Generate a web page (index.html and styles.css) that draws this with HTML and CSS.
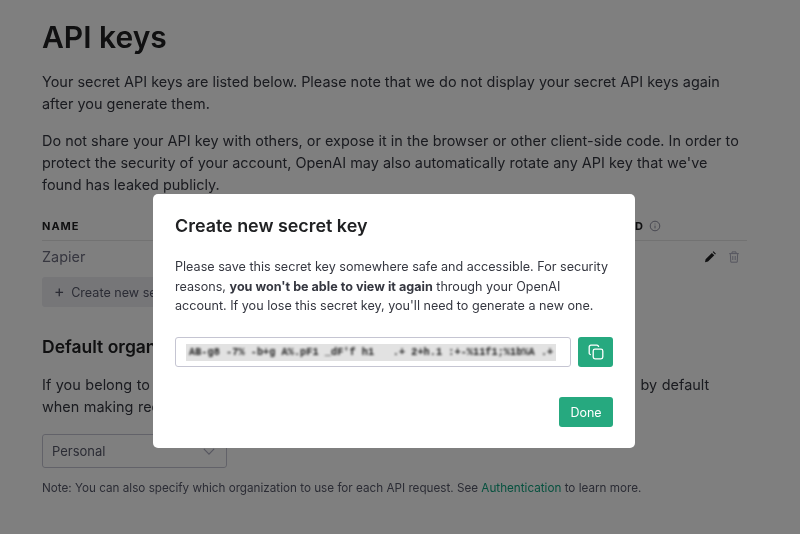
FILE: index.html
```html
<!DOCTYPE html>
<html lang="en">
<head>
	<meta charset="UTF-8">
	<title>API keys</title>
	<link rel="stylesheet" href="styles.css">
</head>
<body>
	<div class="page">
		<h1>API keys</h1>
		<p>Your secret API keys are listed below. Please note that we do not display your secret API keys again after you generate them.</p>
		<p>Do not share your API key with others, or expose it in the browser or other client-side code. In order to protect the security of your account, OpenAI may also automatically rotate any API key that we've found has leaked publicly.</p>

		<div class="table-head">
			<span>NAME</span>
			<span class="last-used">LAST USED
				<svg class="info" viewBox="0 0 12 12" width="12" height="12"><circle cx="6" cy="6" r="4.8"/><path d="M6 5.6v2.8M6 3.6v.8"/></svg>
			</span>
		</div>
		<div class="table-row">
			<span>Zapier</span>
			<span class="actions">
				<svg viewBox="0 0 14 14" width="14" height="14"><path class="pencil" d="M2 12.2l.6-3L8.9 2.9l2.4 2.4L5 11.6zM9.7 2.1l.8-.8 2.4 2.4-.8.8z"/></svg>
				<svg viewBox="0 0 14 14" width="14" height="14"><path class="trash" d="M2.2 3.6h9.6M5 3.4V1.9h4v1.5M3.3 3.8l.5 8.4h6.4l.5-8.4M5.8 6v4M8.2 6v4"/></svg>
			</span>
		</div>
		<button class="add-key"><span class="plus">+</span> Create new secret key</button>

		<h2>Default organization</h2>
		<p class="org-text">If you belong to multiple organizations, this setting controls which organization is used by default<br>when making requests with the API keys above.</p>
		<div class="select">Personal
			<svg viewBox="0 0 14 8" width="12" height="7"><path d="M1 1l6 6 6-6"/></svg>
		</div>
		<p class="note">Note: You can also specify which organization to use for each API request. See <a href="#">Authentication</a> to learn more.</p>
	</div>

	<div class="overlay">
		<div class="modal">
			<h3>Create new secret key</h3>
			<p>Please save this secret key somewhere safe and accessible. For security reasons, <b>you won't be able to view it again</b> through your OpenAI<br>account. If you lose this secret key, you'll need to generate a new one.</p>
			<div class="key-row">
				<div class="key-input"><span class="key-mask"><span class="key-text">AB-g8 -7% -b+g A%.pF1 _dF'f h1   .+ 2+h.1 :+-%11f1;%1b%A .+</span></span></div>
				<button class="copy">
					<svg viewBox="0 0 16 16" width="16" height="16"><rect x="5.2" y="5.2" width="9.6" height="9.6" rx="1.8"/><path d="M2.9 10.6a1.7 1.7 0 0 1-1.7-1.7V2.9a1.7 1.7 0 0 1 1.7-1.7h6a1.7 1.7 0 0 1 1.7 1.7"/></svg>
				</button>
			</div>
			<div class="modal-foot"><button class="done">Done</button></div>
		</div>
	</div>
</body>
</html>
```
FILE: styles.css
```css
*{margin:0;padding:0;box-sizing:border-box;}
html,body{height:100%;overflow:hidden;}
body{background:#fff;color:#353740;font-family:"Inter",sans-serif;font-size:14.44px;line-height:22px;}
.page{padding:19px 53px 0 42px;filter:blur(.35px);}
h1{font-size:30px;line-height:36px;font-weight:600;color:#202123;margin-bottom:16px;}
p{margin-bottom:15px;}
.org-text{word-spacing:.5px;margin-bottom:16px;}

.table-head{display:flex;justify-content:space-between;height:30px;margin-top:15px;padding:2px 91px 0 0;border-bottom:1px solid #e5e5e5;font-size:11px;line-height:26px;font-weight:700;letter-spacing:1px;color:#202123;}
.last-used{display:flex;align-items:center;gap:5px;height:26px;margin-right:-5px;}
.info{fill:none;stroke:#8e8ea0;stroke-width:1;}
.table-row{display:flex;justify-content:space-between;align-items:center;height:32px;padding-right:6px;color:#6e6e80;}
.actions{display:flex;gap:10px;}
.pencil{fill:#202123;}
.trash{fill:none;stroke:#acacbe;stroke-width:1;}
.add-key{display:block;width:190px;height:30px;margin-top:4px;border:0;border-radius:3px;background:#ececf1;color:#565869;font:12.6px/28px "Inter",sans-serif;text-align:left;padding:0 0 2px 12px;}
.plus{font-size:16px;margin-right:3px;}

h2{font-size:17.5px;line-height:24px;font-weight:600;color:#202123;margin:28px 0 15px;}
.select{display:flex;justify-content:space-between;align-items:center;width:185px;height:34px;padding:0 11px 0 9px;border:1px solid #c5c5d2;border-radius:3px;font-size:13px;color:#565869;}
.select svg{fill:none;stroke:#acacbe;stroke-width:1.4;}
.note{font-size:11.7px;margin-top:9px;color:#565869;}
.note a{color:#10a37f;text-decoration:none;}

.overlay{position:fixed;inset:0;background:rgba(0,0,0,.5);}
.modal{position:absolute;left:153px;top:194px;width:482px;height:254px;padding:20px 22px;background:#fff;border-radius:5px;filter:blur(.35px);}
h3{font-size:17.9px;line-height:24px;font-weight:600;color:#202123;margin-bottom:19px;}
.modal p{font-size:12.6px;line-height:19.5px;margin-bottom:21.5px;color:#353740;}
.modal b{font-weight:700;}
.key-row{display:flex;gap:7px;height:30px;}
.key-input{flex:1;display:flex;align-items:center;padding-left:10px;border:1px solid #c5c5d2;border-radius:3px;}
.key-mask{display:block;width:370px;height:17px;background:#e2e2e2;overflow:hidden;}
.key-text{display:block;padding-left:3px;font:bold 10.2px/17px "Liberation Mono",monospace;letter-spacing:.06px;white-space:pre;color:#222;filter:blur(.9px);}
.copy{width:35px;border:0;border-radius:3px;background:#26a97f;display:flex;align-items:center;justify-content:center;}
.copy svg{fill:none;stroke:#fff;stroke-width:1.3;}
.modal-foot{display:flex;justify-content:flex-end;margin-top:30px;}
.done{width:54px;height:30px;border:0;border-radius:3px;background:#26a97f;color:#fff;font:12.5px "Inter",sans-serif;}
```
